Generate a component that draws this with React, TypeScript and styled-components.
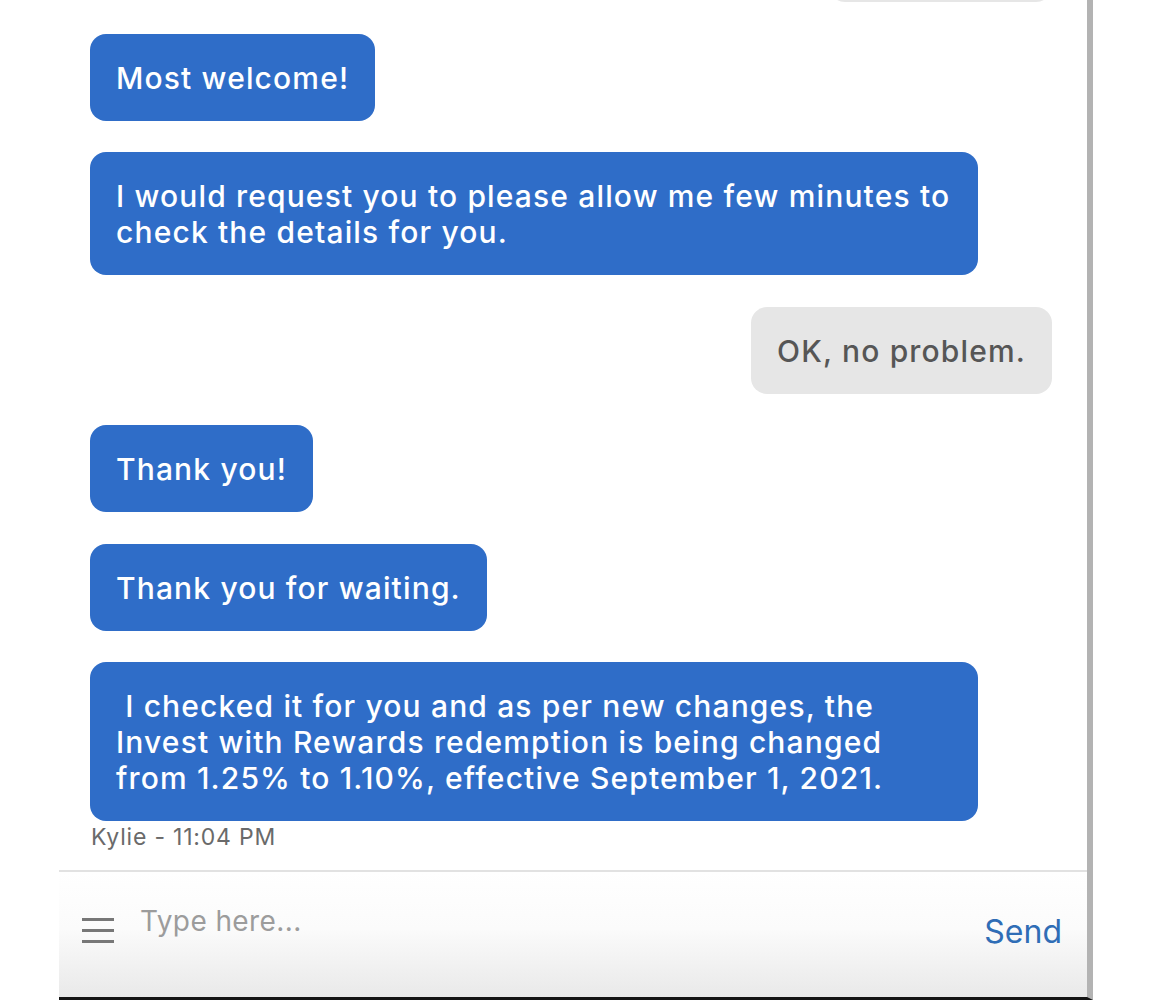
import styled, { createGlobalStyle } from "styled-components";

const GlobalStyle = createGlobalStyle`
  html, body {
    margin: 0;
    padding: 0;
    background: #ffffff;
  }
  body {
    font-family: Inter, "Open Sans", "Liberation Sans", sans-serif;
  }
`;

const Page = styled.div`
  height: 1000px;
  padding-left: 59px;
  overflow: hidden;
`;

const ChatPanel = styled.div`
  width: 1028px;
  height: 997px;
  display: flex;
  flex-direction: column;
  border-right: 6px solid #b3b3b3;
  border-bottom: 3px solid #141414;
  background: #ffffff;
`;

// scrolled to the newest message, older ones slide off the top
const MessageList = styled.div`
  height: 870px;
  display: flex;
  flex-direction: column;
  justify-content: flex-end;
  gap: 31.5px;
  padding: 0 35px 19px 31px;
  box-sizing: border-box;
  overflow: hidden;
`;

const Row = styled.div<{ $mine?: boolean }>`
  display: flex;
  flex-direction: column;
  align-items: ${(p) => (p.$mine ? "flex-end" : "flex-start")};
  flex-shrink: 0;
`;

const Bubble = styled.div<{ $mine?: boolean }>`
  max-width: 888px;
  box-sizing: border-box;
  padding: 26px 26px 25px;
  border-radius: 16px;
  font-size: 30px;
  font-weight: 450;
  line-height: 36px;
  letter-spacing: 1.15px;
  background: ${(p) => (p.$mine ? "#e6e6e6" : "#2f6dc8")};
  color: ${(p) => (p.$mine ? "#565656" : "#ffffff")};
  white-space: pre-wrap;
`;

const Meta = styled.div`
  margin-top: 2px;
  padding-left: 1px;
  font-size: 23px;
  line-height: 28px;
  letter-spacing: 0.8px;
  color: #6a6a6a;
`;

const Composer = styled.div`
  flex: 1;
  display: flex;
  align-items: center;
  gap: 26px;
  padding: 0 25px 6px 23px;
  border-top: 2px solid #e2e2e2;
  background: linear-gradient(#ffffff 0%, #fbfbfb 45%, #e9e9e9 100%);
`;

const MenuButton = styled.button`
  width: 32px;
  height: 25px;
  padding: 0;
  border: none;
  background: none;
  display: flex;
  flex-direction: column;
  justify-content: space-between;
  margin-top: -2px;
  cursor: pointer;

  span {
    display: block;
    height: 3px;
    background: #777777;
  }
`;

const Input = styled.input`
  flex: 1;
  border: none;
  background: transparent;
  outline: none;
  font-family: inherit;
  font-size: 28px;
  letter-spacing: 0.4px;
  color: #444;
  margin-top: -22px;
  padding: 0;

  &::placeholder {
    color: #9c9c9c;
  }
`;

const SendButton = styled.button`
  border: none;
  background: none;
  padding: 0;
  font-family: inherit;
  font-size: 32px;
  color: #2f6db6;
  cursor: pointer;
`;

type Message = { text: string; mine?: boolean; meta?: string };

const messages: Message[] = [
  { text: "Thank you.", mine: true },
  { text: "Most welcome!" },
  {
    text: "I would request you to please allow me few minutes to check the details for you.",
  },
  { text: "OK, no problem.", mine: true },
  { text: "Thank you!" },
  { text: "Thank you for waiting." },
  {
    text: " I checked it for you and as per new changes, the Invest with Rewards redemption is being changed from 1.25% to 1.10%, effective September 1, 2021.",
    meta: "Kylie - 11:04 PM",
  },
];

export default function App() {
  return (
    <>
      <GlobalStyle />
      <Page>
        <ChatPanel>
          <MessageList>
            {messages.map((m, i) => (
              <Row key={i} $mine={m.mine}>
                <Bubble $mine={m.mine}>{m.text}</Bubble>
                {m.meta && <Meta>{m.meta}</Meta>}
              </Row>
            ))}
          </MessageList>
          <Composer>
            <MenuButton aria-label="Menu">
              <span />
              <span />
              <span />
            </MenuButton>
            <Input placeholder="Type here..." />
            <SendButton>Send</SendButton>
          </Composer>
        </ChatPanel>
      </Page>
    </>
  );
}
